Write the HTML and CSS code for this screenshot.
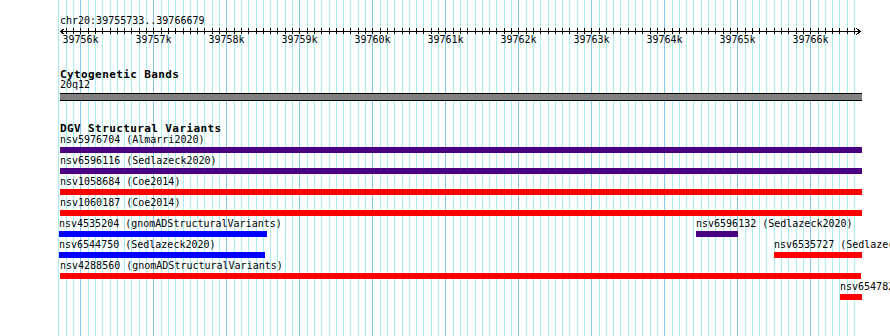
FILE: index.html
```html
<!DOCTYPE html>
<html lang="en">
<head>
  <meta charset="UTF-8">
  <meta name="viewport" content="width=device-width, initial-scale=1.0">
  <title>chr20:39755733..39766679</title>
  <link rel="stylesheet" href="styles.css">
</head>
<body>
  <div id="view">
    <div id="grid"></div>
    <div id="location">chr20:39755733..39766679</div>
    <svg id="ruler" width="890" height="18"></svg>

    <div class="track cyto">
      <div class="trackLabel">Cytogenetic Bands</div>
      <div class="bandName">20q12</div>
      <div class="band"></div>
    </div>

    <div class="track dgv">
      <div class="trackLabel">DGV Structural Variants</div>
      <div class="rows">
        <div class="row">
          <div class="feature" style="left:60px;width:802px"><span>nsv5976704 (Almarri2020)</span><div class="bar purple"></div></div>
        </div>
        <div class="row">
          <div class="feature" style="left:60px;width:802px"><span>nsv6596116 (Sedlazeck2020)</span><div class="bar purple"></div></div>
        </div>
        <div class="row">
          <div class="feature" style="left:60px;width:802px"><span>nsv1058684 (Coe2014)</span><div class="bar red"></div></div>
        </div>
        <div class="row">
          <div class="feature" style="left:60px;width:802px"><span>nsv1060187 (Coe2014)</span><div class="bar red"></div></div>
        </div>
        <div class="row">
          <div class="feature" style="left:59px;width:208px"><span>nsv4535204 (gnomADStructuralVariants)</span><div class="bar blue"></div></div>
          <div class="feature" style="left:696px;width:42px"><span>nsv6596132 (Sedlazeck2020)</span><div class="bar purple"></div></div>
        </div>
        <div class="row">
          <div class="feature" style="left:59px;width:206px"><span>nsv6544750 (Sedlazeck2020)</span><div class="bar blue"></div></div>
          <div class="feature" style="left:774px;width:88px"><span>nsv6535727 (Sedlazeck2020)</span><div class="bar red"></div></div>
        </div>
        <div class="row">
          <div class="feature" style="left:60px;width:801px"><span>nsv4288560 (gnomADStructuralVariants)</span><div class="bar red"></div></div>
        </div>
        <div class="row">
          <div class="feature" style="left:840px;width:22px"><span>nsv6547829 (Sedlazeck2020)</span><div class="bar red"></div></div>
        </div>
      </div>
    </div>
  </div>

  <script>
    // 100bp = 7.3px, 39756k sits at x=80
    function bpToPx(bp) {
      return 80.3 + (bp - 39756000) * 0.073;
    }

    const grid = document.getElementById('grid');
    const ruler = document.getElementById('ruler');
    let lines = '';
    let svg = '<line class="axis" x1="60" y1="3.5" x2="860" y2="3.5"/>';
    svg += '<polyline class="arrow" points="64.5,0.5 60.5,3.5 64.5,6.5"/>';
    svg += '<polyline class="arrow" points="856.5,0.5 860.5,3.5 856.5,6.5"/>';

    for (let bp = 39755700; bp <= 39766600; bp += 100) {
      const x = Math.round(bpToPx(bp));
      const major = bp % 1000 === 0;
      lines += `<div class="gridline${major ? ' major' : ''}" style="left:${x}px"></div>`;
      if (x > 62) {
        svg += `<line class="tick" x1="${x + 0.5}" y1="0" x2="${x + 0.5}" y2="6"/>`;
      }
      if (major) {
        svg += `<text x="${x + 0.5}" y="15">${bp / 1000}k</text>`;
      }
    }

    grid.innerHTML = lines;
    ruler.innerHTML = svg;
  </script>
</body>
</html>
```

FILE: styles.css
```css
body {
  margin: 0;
  font-family: "DejaVu Sans Mono", "Liberation Mono", monospace;
  font-size: 10px;
  line-height: 10px;
  color: #000;
  background: #fff;
  overflow: hidden;
}

#view {
  position: relative;
  width: 890px;
  height: 336px;
  overflow: hidden;
}

/* background grid, one line per 100bp */
#grid {
  position: absolute;
  top: 0;
  left: 0;
  width: 100%;
  height: 100%;
}

.gridline {
  position: absolute;
  top: 0;
  bottom: 0;
  width: 1px;
  background: #a8eef0;
}

.gridline.major {
  background: #86c8ec;
}

#location {
  position: relative;
  padding: 16px 0 0 60px;
}

#ruler {
  position: relative;
  display: block;
  margin-top: 2px;
}

#ruler .axis,
#ruler .tick,
#ruler .arrow {
  stroke: #000;
  stroke-width: 1;
  fill: none;
  shape-rendering: crispEdges;
}

#ruler text {
  font-family: "DejaVu Sans Mono", "Liberation Mono", monospace;
  font-size: 10px;
  text-anchor: middle;
  fill: #000;
}

.track {
  position: relative;
}

.trackLabel {
  font-size: 11px;
  font-weight: bold;
  letter-spacing: 0.4px;
  padding-left: 60px;
}

.cyto {
  margin-top: 24px;
}

.bandName {
  padding-left: 60px;
}

.band {
  margin: 3px 0 0 60px;
  width: 802px;
  height: 6px;
  background: #808080;
  border-top: 1px solid #000;
  border-bottom: 1px solid #000;
}

.dgv {
  margin-top: 23px;
}

.rows {
  margin-top: 1px;
}

.row {
  position: relative;
  height: 21px;
}

.feature {
  position: absolute;
  top: 0;
}

.feature span {
  display: block;
  white-space: nowrap;
}

.bar {
  margin-top: 2px;
  height: 6px;
}

.purple {
  background: #4b0082;
}

.red {
  background: #ff0000;
}

.blue {
  background: #0000ff;
}
```
